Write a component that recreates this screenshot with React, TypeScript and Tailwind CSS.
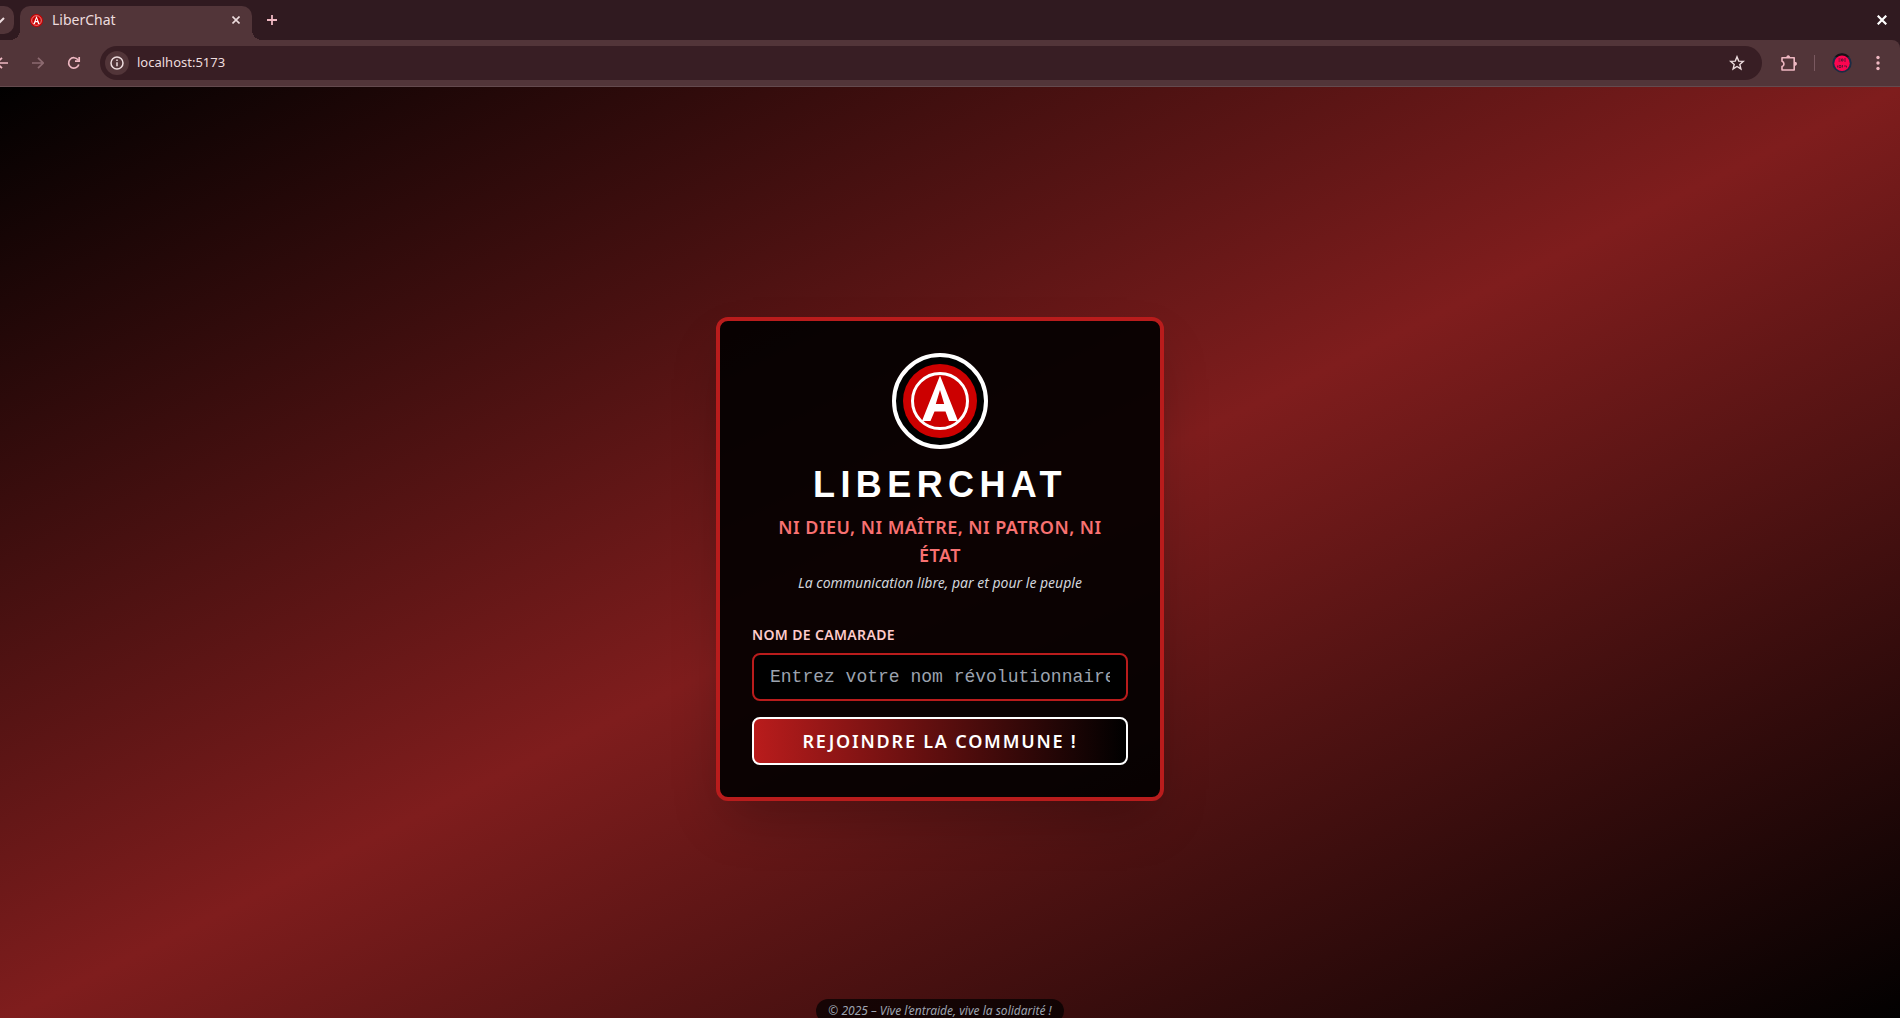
import React from "react";

function AnarchyMark({ className }: { className?: string }) {
  return (
    <svg viewBox="0 0 74 74" className={className} aria-hidden="true">
      <circle cx="37" cy="37" r="37" fill="#cc0000" />
      <circle cx="37" cy="37" r="27.5" fill="none" stroke="#fff" strokeWidth="3" />
      <path
        fill="#fff"
        fillRule="evenodd"
        d="M37 11.5 L55 57 H46 L42.500 47.500 H31.500 L27.500 57 H19 Z M37 26 L32.800 40 H41.200 Z"
      />
    </svg>
  );
}

function TabStrip() {
  return (
    <div className="flex h-10 shrink-0 items-end bg-[#301a20] text-[#eddcde]">
      <button
        aria-label="Rechercher dans les onglets"
        className="mb-[6px] flex h-7 w-[14px] items-center justify-start overflow-hidden rounded-r-[10px] bg-[#523539]"
      >
        <svg viewBox="0 0 10 10" className="-ml-[5px] size-[10px] shrink-0" fill="none" stroke="currentColor" strokeWidth="2">
          <path d="M1 3l4 4 4-4" />
        </svg>
      </button>
      <div className="relative ml-[6px] flex h-[34px] w-[232px] items-center rounded-t-[10px] bg-[#523539] pb-[6px] pr-[10px] pl-[10px] before:absolute before:bottom-0 before:-left-[10px] before:size-[10px] before:bg-[radial-gradient(circle_at_0_0,transparent_10px,#523539_10px)] after:absolute after:-right-[10px] after:bottom-0 after:size-[10px] after:bg-[radial-gradient(circle_at_100%_0,transparent_10px,#523539_10px)]">
        <AnarchyMark className="size-[13px]" />
        <span className="ml-[9px] flex-1 text-sm">LiberChat</span>
        <button aria-label="Fermer l'onglet" className="flex size-3 items-center justify-center">
          <svg viewBox="0 0 8 8" className="size-2" stroke="currentColor" strokeWidth="1.6">
            <path d="M.5 .5l7 7M7.500 .5l-7 7" />
          </svg>
        </button>
      </div>
      <button aria-label="Nouvel onglet" className="ml-[14px] mb-[14px] flex size-3 items-center justify-center text-[#efb8c2]">
        <svg viewBox="0 0 10 10" className="size-[10px]" stroke="currentColor" strokeWidth="1.8">
          <path d="M5 0v10M0 5h10" />
        </svg>
      </button>
      <button aria-label="Fermer la fenêtre" className="mr-3 mb-[14px] ml-auto flex size-3 items-center justify-center text-white">
        <svg viewBox="0 0 10 10" className="size-[10px]" stroke="currentColor" strokeWidth="2.200">
          <path d="M.7 .7l8.600 8.600M9.300 .7l-8.600 8.600" />
        </svg>
      </button>
    </div>
  );
}

function Toolbar() {
  return (
    <div className="bg-[#301a20]">
      <div className="flex h-[47px] shrink-0 items-center rounded-tr-lg border-b border-[#644a4e] bg-[#523539] text-[#efb8c2]">
        <button aria-label="Retour" className="-ml-1 size-3">
          <svg viewBox="0 0 12 12" className="size-3" fill="none" stroke="currentColor" strokeWidth="1.700">
            <path d="M12 6H1M6 .8L.8 6 6 11.200" />
          </svg>
        </button>
        <button aria-label="Avancer" className="ml-6 size-3 text-[#8c6a70]">
          <svg viewBox="0 0 12 12" className="size-3" fill="none" stroke="currentColor" strokeWidth="1.700">
            <path d="M0 6h11M6 .8L11.200 6 6 11.200" />
          </svg>
        </button>
        <button aria-label="Actualiser" className="ml-6 size-3">
          <svg viewBox="0 0 12 12" className="size-3 overflow-visible" fill="none" stroke="currentColor" strokeWidth="1.700">
            <path d="M10.800 7.500A5.200 5.200 0 1 1 10 2.800M11.200 0v4.200H7" />
          </svg>
        </button>
        <div className="ml-5 flex h-[34px] flex-1 items-center rounded-full bg-[#381e24] pr-[17px] pl-[5px] text-[#eddcde]">
          <button aria-label="Informations sur le site" className="flex size-6 items-center justify-center rounded-full bg-[#523539]">
            <svg viewBox="0 0 14 14" className="size-[14px]" fill="none" stroke="currentColor" strokeWidth="1.500">
              <circle cx="7" cy="7" r="6" />
              <path d="M7 6.300v4M7 3.500v1.500" />
            </svg>
          </button>
          <input
            aria-label="Adresse"
            defaultValue="localhost:5173"
            className="ml-2 min-w-0 flex-1 bg-transparent text-[13px] outline-none"
          />
          <button aria-label="Ajouter aux favoris" className="size-4">
            <svg viewBox="0 0 16 16" className="size-4" fill="none" stroke="currentColor" strokeWidth="1.400">
              <path d="M8 1.800l1.700 4.300 4.600.3-3.500 3 1.100 4.500L8 11.500l-3.900 2.400 1.100-4.500-3.500-3 4.600-.3z" />
            </svg>
          </button>
        </div>
        <button aria-label="Extensions" className="ml-[18px] size-[18px]">
          <svg viewBox="0 0 18 18" className="size-[18px]" fill="none" stroke="currentColor" strokeWidth="1.600">
            <path d="M2 3.800h12.200V16H2v-3.500c2.600-.8 2.600-4.400 0-5.200z" strokeLinejoin="round" />
            <path d="M6.500 3a1.700 1.700 0 0 1 3.400 0zM15 8a1.700 1.700 0 0 1 0 3.400z" fill="currentColor" stroke="none" />
            <path d="M7.200 3.200a1.200 1.200 0 0 1 2 0M14.800 8.500a1.200 1.200 0 0 1 0 2.400" />
          </svg>
        </button>
        <span className="ml-4 h-4 w-px bg-[#7a5960]" />
        <button aria-label="Profil" className="ml-[17px] size-5">
          <svg viewBox="0 0 20 20" className="size-5">
            <circle cx="10" cy="10" r="9.700" fill="#1b2c45" />
            <path d="M3 3.200a10 10 0 0 1 14 0L15 5H5z" fill="#181014" />
            <circle cx="10" cy="10.200" r="7.700" fill="#fc0550" />
            <path
              d="M6.500 6h2M6.500 8h2M9.500 6h1.500v2H9.500zM12 6h2M12 8h2M5.500 12.500v2M7 12.500h2v2H7zM10.500 12v2.500M12 13h2.500v1.500"
              fill="none"
              stroke="#6a1238"
              strokeWidth="1"
            />
          </svg>
        </button>
        <button aria-label="Menu" className="mr-[14px] ml-[18px] flex h-4 w-[16px] items-center justify-center">
          <svg viewBox="0 0 4 16" className="h-4 w-1" fill="currentColor">
            <circle cx="2" cy="2.500" r="1.700" />
            <circle cx="2" cy="8" r="1.700" />
            <circle cx="2" cy="13.500" r="1.700" />
          </svg>
        </button>
      </div>
    </div>
  );
}

function LoginCard() {
  return (
    <section className="w-full max-w-md rounded-xl border-4 border-[#b91c1c] bg-black/90 p-8 shadow-2xl">
      <header className="mb-8 flex flex-col items-center text-center">
        <div className="mb-4 flex size-24 items-center justify-center rounded-full border-4 border-white bg-black">
          <AnarchyMark className="size-[74px]" />
        </div>
        <h1 className="font-['Liberation_Sans',sans-serif] text-4xl font-bold tracking-[0.15em] text-white uppercase">
          LiberChat
        </h1>
        <p className="mt-2 px-3 text-lg font-semibold tracking-wide text-[#f87171] uppercase">
          Ni Dieu, Ni Maître, Ni Patron, Ni État
        </p>
        <p className="mt-1 text-sm text-[#d1d5db] italic">La communication libre, par et pour le peuple</p>
      </header>
      <form onSubmit={(e) => e.preventDefault()}>
        <label htmlFor="username" className="mb-2 block text-sm font-semibold tracking-wide text-[#fecaca] uppercase">
          Nom de camarade
        </label>
        <input
          id="username"
          type="text"
          placeholder="Entrez votre nom révolutionnaire"
          className="block w-full rounded-lg border-2 border-[#b91c1c] bg-black px-4 py-2 font-['Liberation_Mono',monospace] text-lg text-white placeholder:text-[#9ca3af]"
        />
        <button
          type="submit"
          className="mt-4 w-full rounded-lg border-2 border-white bg-linear-to-r/srgb from-[#b91c1c] to-black px-4 py-2 text-lg font-semibold tracking-widest text-white uppercase"
        >
          Rejoindre la Commune !
        </button>
      </form>
    </section>
  );
}

export default function App() {
  return (
    <div className="flex h-screen flex-col overflow-hidden font-['Noto_Sans',sans-serif]">
      <TabStrip />
      <Toolbar />
      <main className="relative -mb-[13px] -ml-5 flex flex-1 items-center justify-center bg-linear-to-br/srgb from-black via-[#7f1d1d] to-black">
        <LoginCard />
        <footer className="absolute inset-x-0 bottom-2 flex justify-center">
          <span className="rounded-full bg-black/70 px-3 py-1 text-xs text-[#9ca3af] italic">
            © 2025 – Vive l’entraide, vive la solidarité !
          </span>
        </footer>
      </main>
    </div>
  );
}
